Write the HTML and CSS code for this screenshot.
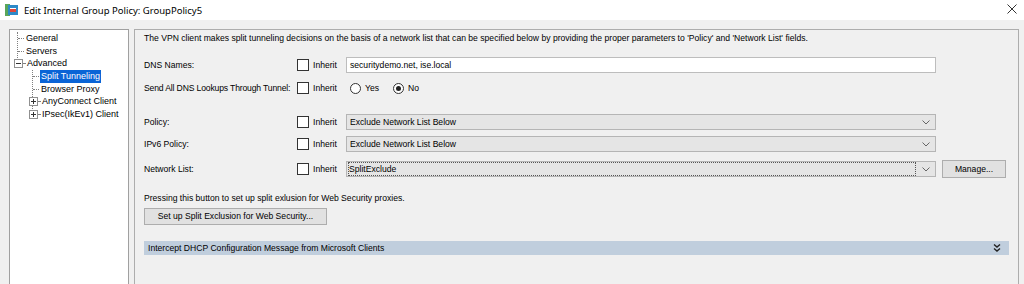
FILE: index.html
```html
<!DOCTYPE html>
<html>
<head>
<meta charset="utf-8">
<link rel="stylesheet" href="styles.css">
</head>
<body>
<div class="titlebar">
  <svg class="appicon" width="14" height="14" viewBox="0 0 14 14">
    <rect x="0" y="1" width="5" height="12" fill="#5aa65a"/>
    <rect x="3" y="2" width="10" height="10" fill="#2d89c8"/>
    <rect x="5" y="5" width="6" height="4" fill="#e0453a"/>
    <rect x="5" y="5" width="6" height="1" fill="#ffffff"/>
  </svg>
  <span class="title">Edit Internal Group Policy: GroupPolicy5</span>
  <svg class="close" width="10" height="10" viewBox="0 0 10 10"><path d="M0.5 0.5 L9.5 9.5 M9.5 0.5 L0.5 9.5" stroke="#333" stroke-width="1"/></svg>
</div>
<div class="main">
  <div class="tree">
    <div class="vline v1"></div>
    <div class="vline v2"></div>
    <div class="node l0"><span class="hl"></span><span class="txt">General</span></div>
    <div class="node l0"><span class="hl"></span><span class="txt">Servers</span></div>
    <div class="node l0"><span class="box minus"></span><span class="hl short"></span><span class="txt">Advanced</span></div>
    <div class="node l1"><span class="hl"></span><span class="txt sel">Split Tunneling</span></div>
    <div class="node l1"><span class="hl"></span><span class="txt">Browser Proxy</span></div>
    <div class="node l1"><span class="box plus"></span><span class="hl short"></span><span class="txt">AnyConnect Client</span></div>
    <div class="node l1"><span class="box plus"></span><span class="hl short"></span><span class="txt">IPsec(IkEv1) Client</span></div>
  </div>
  <div class="panel">
    <div class="desc">The VPN client makes split tunneling decisions on the basis of a network list that can be specified below by providing the proper parameters to 'Policy' and 'Network List' fields.</div>
    <div class="row r-dns">
      <div class="lbl">DNS Names:</div>
      <div class="inh"><span class="cb"></span>Inherit</div>
      <div class="input">securitydemo.net, ise.local</div>
    </div>
    <div class="row r-send">
      <div class="lbl tight">Send All DNS Lookups Through Tunnel:</div>
      <div class="inh"><span class="cb"></span>Inherit</div>
      <div class="radios">
        <span class="radio"></span><span class="rl">Yes</span>
        <span class="radio on"></span><span class="rl">No</span>
      </div>
    </div>
    <div class="row r-policy">
      <div class="lbl">Policy:</div>
      <div class="inh"><span class="cb"></span>Inherit</div>
      <div class="select"><span class="val">Exclude Network List Below</span><svg class="chev" width="8" height="5" viewBox="0 0 8 5"><path d="M0.5 0.5 L4 4 L7.5 0.5" fill="none" stroke="#666" stroke-width="1"/></svg></div>
    </div>
    <div class="row r-ipv6">
      <div class="lbl">IPv6 Policy:</div>
      <div class="inh"><span class="cb"></span>Inherit</div>
      <div class="select"><span class="val">Exclude Network List Below</span><svg class="chev" width="8" height="5" viewBox="0 0 8 5"><path d="M0.5 0.5 L4 4 L7.5 0.5" fill="none" stroke="#666" stroke-width="1"/></svg></div>
    </div>
    <div class="row r-net">
      <div class="lbl">Network List:</div>
      <div class="inh"><span class="cb"></span>Inherit</div>
      <div class="select"><span class="val focus">SplitExclude</span><svg class="chev" width="8" height="5" viewBox="0 0 8 5"><path d="M0.5 0.5 L4 4 L7.5 0.5" fill="none" stroke="#666" stroke-width="1"/></svg></div>
      <div class="btn manage">Manage...</div>
    </div>
    <div class="press">Pressing this button to set up split exlusion for Web Security proxies.</div>
    <div class="btn setup">Set up Split Exclusion for Web Security...</div>
    <div class="bar">
      <span>Intercept DHCP Configuration Message from Microsoft Clients</span>
      <svg class="dbl" width="8" height="8" viewBox="0 0 8 8"><path d="M1 0.5 L4 3 L7 0.5 M1 4.5 L4 7 L7 4.5" fill="none" stroke="#222" stroke-width="1.4"/></svg>
    </div>
  </div>
</div>
</body>
</html>
```
FILE: styles.css
```css
html, body {
  margin: 0;
  padding: 0;
}
body {
  width: 1024px;
  height: 284px;
  overflow: hidden;
  background: #f0f0f0;
  font-family: "Liberation Sans", Arial, sans-serif;
  font-size: 8.6px;
  color: #000;
}
.titlebar {
  height: 20px;
  background: #ffffff;
  display: flex;
  align-items: center;
  padding-left: 5px;
  position: relative;
}
.appicon { margin-right: 5px; }
.title {
  font-family: "Noto Sans", "Liberation Sans", sans-serif;
  font-size: 9.5px;
  color: #000;
}
.close {
  position: absolute;
  right: 7px;
  top: 4px;
}
.main {
  display: flex;
  padding: 9px 0 0 9px;
  gap: 5px;
  box-sizing: border-box;
  height: 264px;
}
.tree {
  width: 120px;
  height: 255px;
  background: #fff;
  border: 1px solid #a0a0a0;
  border-bottom: none;
  padding-top: 2px;
  position: relative;
  box-sizing: border-box;
  font-size: 9px;
}
.vline {
  position: absolute;
  border-left: 1px dotted #808080;
}
.v1 { left: 7px; top: 2px; height: 28px; }
.v2 { left: 22px; top: 40px; height: 45px; }
.node {
  height: 12.7px;
  line-height: 12.7px;
  display: flex;
  align-items: center;
  position: relative;
}
.node.l0 { padding-left: 8px; }
.node.l1 { padding-left: 23px; }
.hl {
  width: 6px;
  border-top: 1px dotted #808080;
  margin-right: 1px;
}
.hl.short { width: 2px; }
.box {
  width: 7px;
  height: 7px;
  border: 1px solid #909090;
  background: #fff;
  position: relative;
  margin-left: -4px;
  box-sizing: content-box;
}
.box::before {
  content: "";
  position: absolute;
  left: 1px; top: 3px;
  width: 5px; height: 1px;
  background: #333;
}
.plus::after {
  content: "";
  position: absolute;
  left: 3px; top: 1px;
  width: 1px; height: 5px;
  background: #333;
}
.txt { padding: 0 1px; white-space: nowrap; }
.sel { background: #0a64d6; color: #fff; }
.panel {
  width: 885px;
  height: 255px;
  box-sizing: border-box;
  border: 1px solid #adadad;
  border-bottom: none;
  padding: 2px 0 0 9px;
}
.desc { height: 12px; line-height: 12px; }
.row {
  display: flex;
  align-items: center;
}
.lbl { width: 153px; white-space: nowrap; }
.lbl.tight { letter-spacing: -0.15px; }
.inh {
  width: 49px;
  display: flex;
  align-items: center;
}
.cb {
  width: 12px;
  height: 12px;
  border: 1px solid #333;
  background: #fff;
  margin-right: 4px;
  box-sizing: border-box;
}
.r-dns { margin-top: 13px; height: 16px; }
.r-send { margin-top: 7px; height: 16px; }
.r-policy { margin-top: 18px; height: 16px; }
.r-ipv6 { margin-top: 6px; height: 16px; }
.r-net { margin-top: 8px; height: 18px; }
.input {
  width: 590px;
  height: 16px;
  line-height: 14px;
  box-sizing: border-box;
  background: #fff;
  border: 1px solid #bdbdbd;
  padding-left: 3px;
}
.radios {
  display: flex;
  align-items: center;
  padding-left: 4px;
}
.radio {
  width: 11px;
  height: 11px;
  box-sizing: border-box;
  border: 1px solid #333;
  border-radius: 50%;
  background: #fff;
  margin-right: 4px;
  position: relative;
}
.radio.on::after {
  content: "";
  position: absolute;
  left: 2px; top: 2px;
  width: 5px; height: 5px;
  border-radius: 50%;
  background: #222;
}
.rl { margin-right: 14px; }
.select {
  width: 590px;
  height: 16px;
  box-sizing: border-box;
  background: #e5e5e5;
  border: 1px solid #b5b5b5;
  display: flex;
  align-items: center;
  padding-left: 3px;
}
.val { flex: 1; line-height: 12px; }
.val.focus {
  margin-left: -1px;
  margin-right: 4px;
  outline: 1px dotted #555;
  outline-offset: 0;
  height: 12px;
}
.chev {
  margin: 0 5px 0 3px;
}
.btn {
  background: #e1e1e1;
  border: 1px solid #adadad;
  box-sizing: border-box;
  text-align: center;
}
.manage {
  width: 64px;
  height: 18px;
  line-height: 16px;
  margin-left: 6px;
}
.press { margin-top: 14px; height: 12px; line-height: 12px; }
.setup {
  margin-top: 4px;
  width: 183px;
  height: 17px;
  line-height: 15px;
}
.bar {
  margin-top: 16px;
  width: 865px;
  height: 14px;
  background: #c0cedd;
  display: flex;
  align-items: center;
  justify-content: space-between;
  padding-left: 4px;
  padding-right: 8px;
  box-sizing: border-box;
}
```
